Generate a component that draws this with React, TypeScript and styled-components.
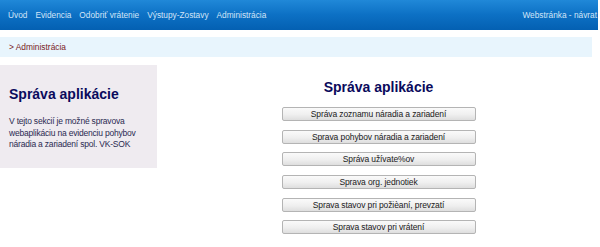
import styled, { createGlobalStyle } from 'styled-components';

const GlobalStyle = createGlobalStyle`
  html, body {
    margin: 0;
    padding: 0;
    background: #ffffff;
  }
  body {
    font-family: "Liberation Sans", Arial, sans-serif;
  }
`;

const Page = styled.div`
  width: 600px;
  height: 247px;
  overflow: hidden;
`;

const TopBar = styled.div`
  width: 598px;
  height: 30px;
  display: flex;
  align-items: center;
  justify-content: space-between;
  background: linear-gradient(to bottom, #2088d8 0%, #0c70c4 50%, #0460b2 100%);
  box-sizing: border-box;
  padding: 0 1px 1px 8px;
`;

const NavList = styled.nav`
  display: flex;
  gap: 8px;
`;

const NavLink = styled.a`
  color: #d2e5f8;
  font-size: 8.3px;
  text-decoration: none;
  white-space: nowrap;
`;

const Crumbs = styled.div`
  width: 592px;
  height: 20px;
  margin-top: 7px;
  background: #e8f5fd;
  display: flex;
  align-items: center;
  padding-left: 9px;
  box-sizing: border-box;
  color: #7a1a22;
  font-size: 8.4px;
`;

const Main = styled.div`
  display: flex;
  margin-top: 8px;
`;

const Sidebar = styled.aside`
  width: 157px;
  height: 103px;
  flex: none;
  background: #efebf0;
  box-sizing: border-box;
  padding: 21px 8px 0 9px;
`;

const Heading = styled.h1`
  margin: 0;
  color: #0a0a5c;
  font-size: 14px;
  font-weight: bold;
  line-height: 17px;
`;

const SideText = styled.p`
  margin: 13px 0 0;
  color: #2a2a50;
  font-size: 8.5px;
  letter-spacing: -0.2px;
  line-height: 11.5px;
`;

const Content = styled.section`
  flex: 1;
  display: flex;
  flex-direction: column;
  align-items: center;
  padding-top: 14px;
`;

const ButtonList = styled.div`
  display: flex;
  flex-direction: column;
  gap: 8.7px;
  margin-top: 11px;
`;

const ActionButton = styled.button`
  width: 194px;
  height: 14px;
  padding: 0;
  border: 1px solid #b4b4b4;
  border-radius: 2px;
  background: linear-gradient(to bottom, #fafafa 0%, #efefef 55%, #dedede 100%);
  color: #202020;
  font-family: "Liberation Sans", Arial, sans-serif;
  font-size: 8.5px;
  letter-spacing: -0.1px;
  line-height: 12px;
  cursor: pointer;
`;

const navItems = ['Úvod', 'Evidencia', 'Odobriť vrátenie', 'Výstupy-Zostavy', 'Administrácia'];

const actions = [
  'Správa zoznamu náradia a zariadení',
  'Sprava pohybov náradia a zariadení',
  'Správa užívate%ov',
  'Sprava org. jednotiek',
  'Sprava stavov pri požièaní, prevzatí',
  'Sprava stavov pri vrátení',
];

export default function App() {
  return (
    <Page>
      <GlobalStyle />
      <TopBar>
        <NavList>
          {navItems.map(item => (
            <NavLink key={item} href="#">{item}</NavLink>
          ))}
        </NavList>
        <NavLink href="#">Webstránka - návrat</NavLink>
      </TopBar>
      <Crumbs>&gt; Administrácia</Crumbs>
      <Main>
        <Sidebar>
          <Heading>Správa aplikácie</Heading>
          <SideText>
            V tejto sekcií je možné spravova webaplikáciu na evidenciu pohybov náradia a zariadení spol. VK-SOK
          </SideText>
        </Sidebar>
        <Content>
          <Heading>Správa aplikácie</Heading>
          <ButtonList>
            {actions.map(label => (
              <ActionButton key={label}>{label}</ActionButton>
            ))}
          </ButtonList>
        </Content>
      </Main>
    </Page>
  );
}
